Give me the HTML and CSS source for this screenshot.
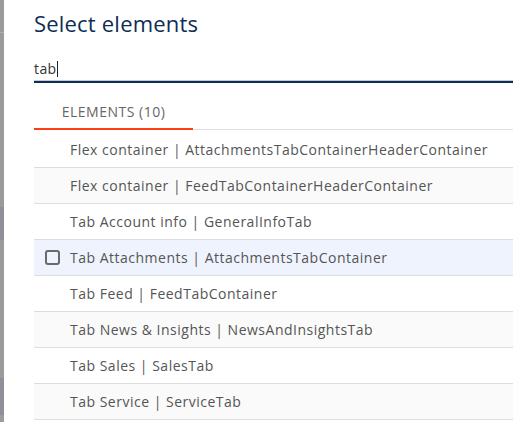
FILE: index.html
```html
<!DOCTYPE html>
<html>
  <head>
    <meta charset="utf-8">
    <title>Select elements</title>
    <link rel="stylesheet" href="styles.css">
  </head>
  <body>
    <div class="backdrop">
      <div class="backdrop-line"></div>
      <div class="backdrop-band"></div>
      <div class="backdrop-band backdrop-band-low"></div>
    </div>
    <div class="dialog">
      <h2 class="dialog-title">Select elements</h2>
      <div class="search">
        <span class="search-value">tab</span><span class="caret"></span>
      </div>
      <div class="tabs">
        <div class="tab tab-active">Elements (10)</div>
      </div>
      <ul class="element-list">
        <li class="element">Flex container | AttachmentsTabContainerHeaderContainer</li>
        <li class="element">Flex container | FeedTabContainerHeaderContainer</li>
        <li class="element">Tab Account info | GeneralInfoTab</li>
        <li class="element element-hover"><span class="checkbox"></span>Tab Attachments | AttachmentsTabContainer</li>
        <li class="element">Tab Feed | FeedTabContainer</li>
        <li class="element">Tab News &amp; Insights | NewsAndInsightsTab</li>
        <li class="element">Tab Sales | SalesTab</li>
        <li class="element">Tab Service | ServiceTab</li>
      </ul>
    </div>
  </body>
</html>
```

FILE: styles.css
```css
html, body {
  margin: 0;
  padding: 0;
  height: 100%;
  overflow: hidden;
}

body {
  display: flex;
  background-color: #9b9b9b;
  font-family: "Open Sans", Arial, sans-serif;
}

/* dimmed page behind the dialog */
.backdrop {
  width: 4px;
  flex: none;
  display: flex;
  flex-direction: column;
}

.backdrop-line {
  height: 1px;
  margin-top: 32px;
  background-color: #b0b0b0;
}

.backdrop-band {
  height: 33px;
  margin-top: 174px;
  background-color: #8e8f99;
}

.backdrop-band-low {
  height: 37px;
  margin-top: 138px;
}

.dialog {
  flex: 1;
  background-color: #fff;
  padding-left: 30px;
}

.dialog-title {
  margin: 0;
  padding-top: 8px;
  font-size: 22px;
  font-weight: 500;
  line-height: 30px;
  color: #0d2d56;
  letter-spacing: 0.2px;
}

.search {
  margin-top: 19px;
  height: 24px;
  font-size: 14px;
  line-height: 24px;
  color: #333;
  border-bottom: 2px solid #0d2d56;
  background-image: linear-gradient(to right, #8a96a8 50%, transparent 50%);
  background-size: 2px 1px;
  background-repeat: repeat-x;
  background-position: bottom;
  letter-spacing: 0.4px;
}

.caret {
  display: inline-block;
  width: 1px;
  height: 16px;
  vertical-align: -3px;
  background-color: #222;
}

.tabs {
  margin-top: 13px;
  display: flex;
  border-bottom: 1px solid #e0e0e0;
}

.tab {
  width: 159px;
  height: 34px;
  box-sizing: border-box;
  text-align: center;
  font-size: 14px;
  line-height: 32px;
  color: #666;
  text-transform: uppercase;
  letter-spacing: 0.5px;
}

.tab-active {
  border-bottom: 2px solid #ff3d12;
  margin-bottom: -1px;
}

.element-list {
  list-style: none;
  margin: 2px 0 0;
  padding: 0;
}

.element {
  display: flex;
  align-items: center;
  height: 36px;
  box-sizing: border-box;
  padding-left: 36px;
  border-bottom: 1px solid #ddd;
  font-size: 14px;
  color: #555;
  letter-spacing: 0.5px;
  white-space: nowrap;
}

.element:nth-child(even) {
  background-color: #fafafa;
}

.element-hover,
.element-hover:nth-child(even) {
  background-color: #eff3fd;
  padding-left: 11px;
}

.checkbox {
  width: 11px;
  height: 11px;
  margin-right: 10px;
  border: 2px solid #6a6a6a;
  border-radius: 3px;
  flex: none;
}
```
